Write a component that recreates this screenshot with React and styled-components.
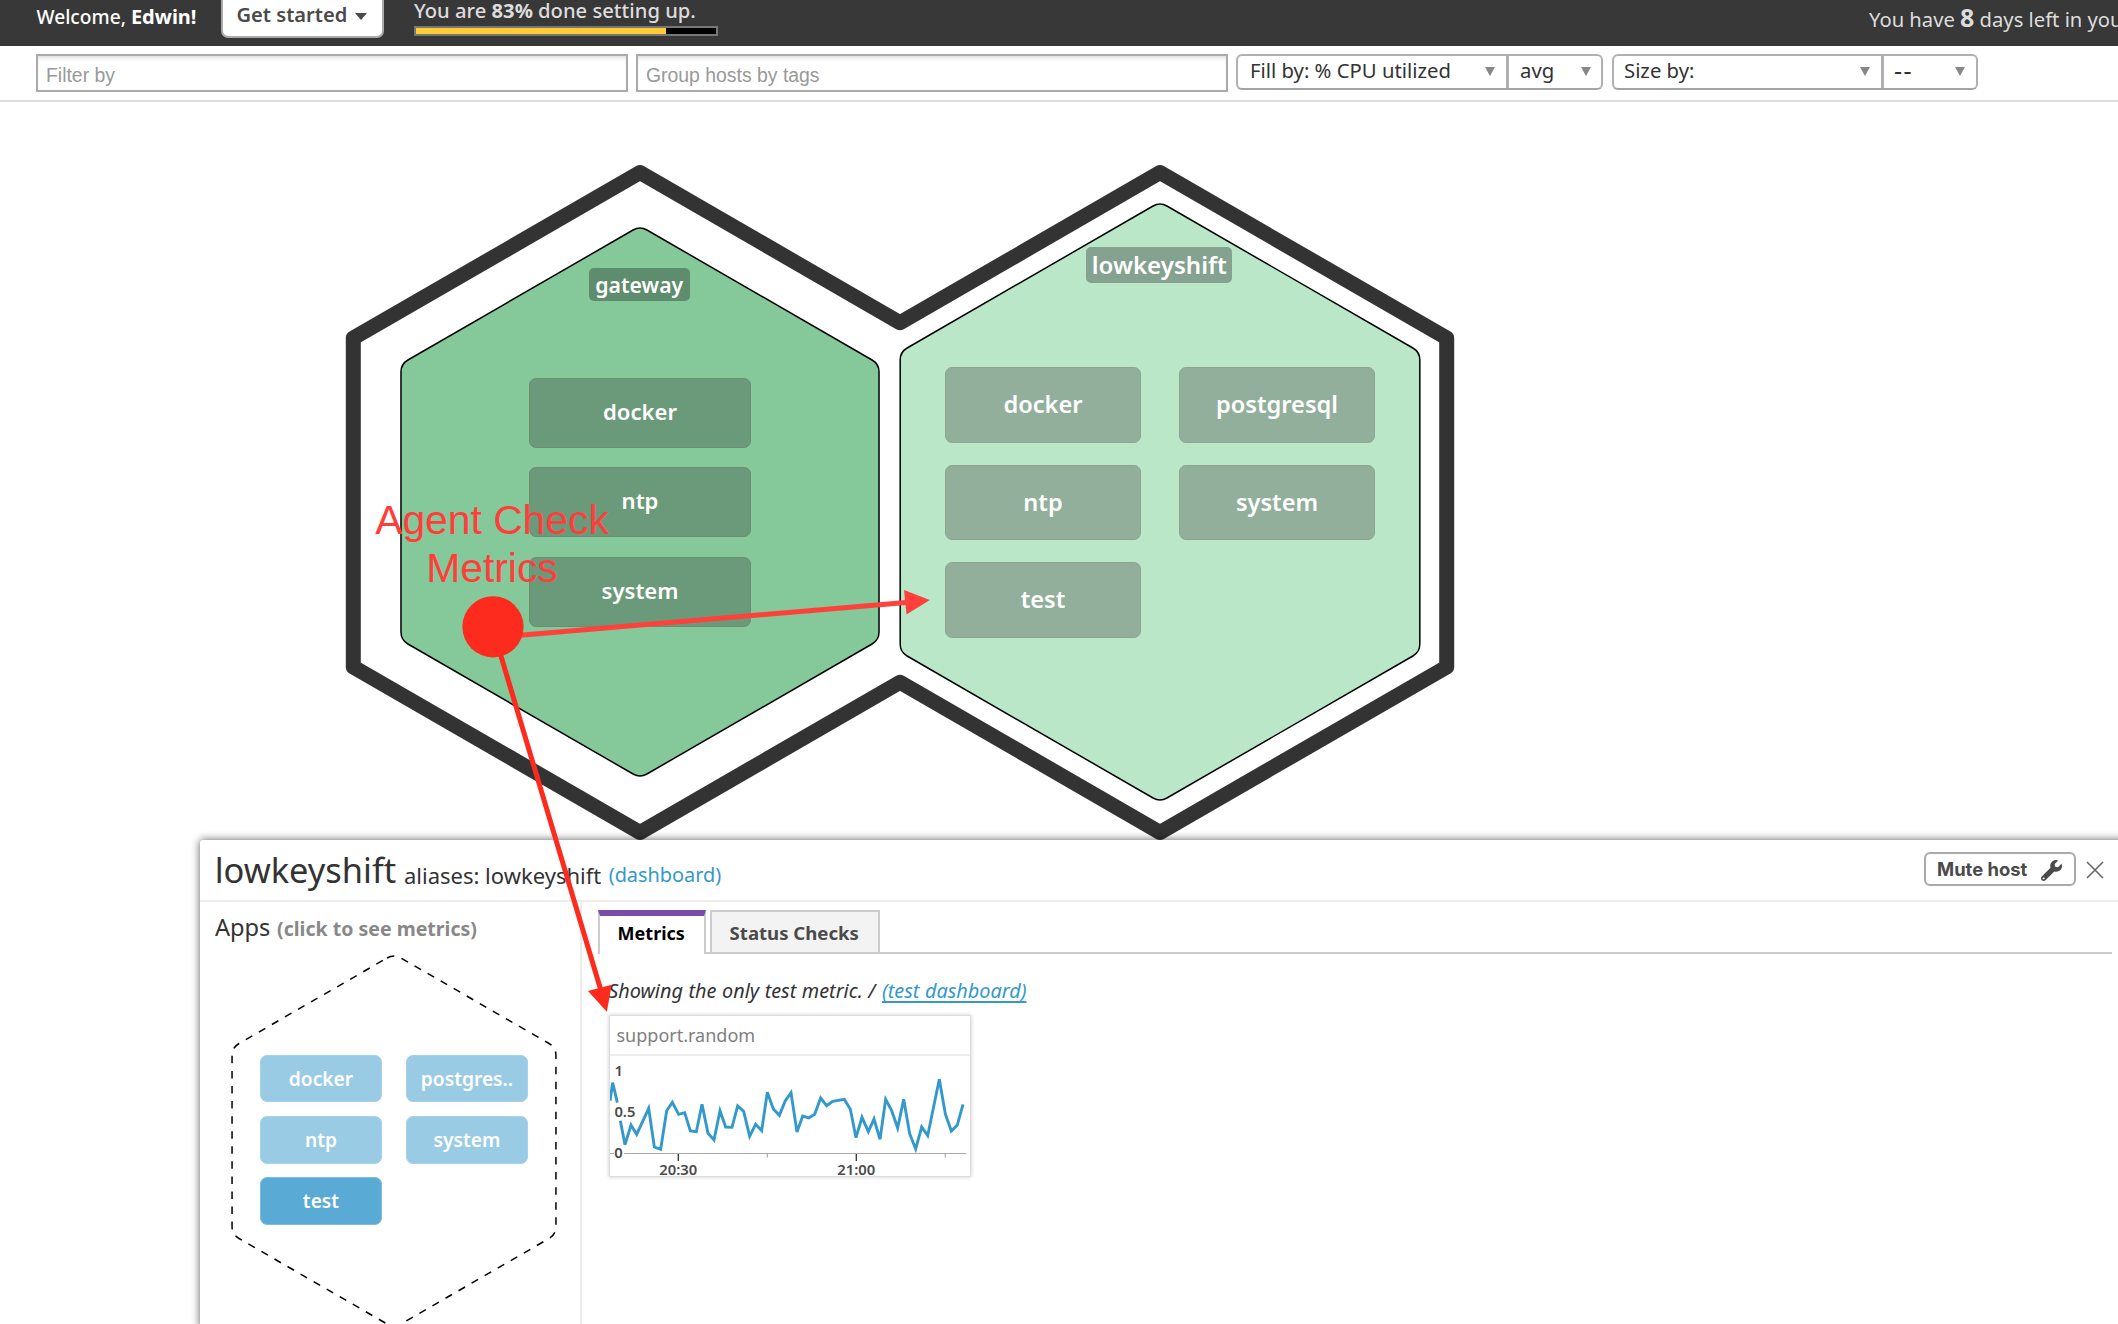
import React from 'react';
import styled, { createGlobalStyle, css } from 'styled-components';
import { FaWrench } from 'react-icons/fa';

const GlobalStyle = createGlobalStyle`
  *, *::before, *::after { box-sizing: border-box; }
  html, body { margin: 0; padding: 0; background: #fff; }
  body { overflow: hidden; font-family: "Noto Sans", sans-serif; color: #333; }
  h2, h3, p { margin: 0; font-weight: 400; }
`;

const Page = styled.div`
  position: relative;
  display: flex;
  flex-direction: column;
  width: 2118px;
  height: 1324px;
  overflow: hidden;
`;

/* ---------- header ---------- */

const Header = styled.header`
  display: flex;
  align-items: flex-start;
  flex: none;
  height: 46px;
  padding-left: 36.5px;
  background: #383838;
  font-size: 20px;
  white-space: nowrap;
`;

const Welcome = styled.div`
  flex: none;
  width: 184px;
  line-height: 33px;
  font-weight: 500;
  font-size: 19.2px;
  color: #fff;

  b { font-size: 20px; }
`;

const StartButton = styled.button`
  display: flex;
  flex: none;
  align-items: center;
  gap: 8px;
  width: 163.5px;
  height: 48px;
  margin: -10px 30px 0 0;
  padding: 1px 0 0 14px;
  border: 2px solid #aaa;
  border-radius: 7px;
  background: #fff;
  font: 600 20.1px/44px "Noto Sans", sans-serif;
  color: #4a4a4a;
`;

const CaretDown = styled.span`
  margin-top: 3px;
  border: 6px solid transparent;
  border-top: 7px solid #4a4a4a;
  border-bottom: 0;
`;

const Setup = styled.div`
  display: flex;
  flex: none;
  flex-direction: column;
  gap: 5px;
  line-height: 21px;
  color: #ddd;
  font-size: 20.2px;
  font-weight: 480;
`;

const Progress = styled.div`
  width: 304px;
  height: 10px;
  border: 2px solid #777;
  background: #000;
`;

const ProgressFill = styled.div`
  width: ${(p) => p.$percent}%;
  height: 100%;
  background: #fc3;
`;

const Trial = styled.div`
  flex: none;
  margin-left: 1151px;
  line-height: 38px;
  font-size: 20.2px;
  font-weight: 430;
  color: #ddd;

  b { font-size: 25px; line-height: 0; }
`;

/* ---------- toolbar ---------- */

const Toolbar = styled.div`
  display: flex;
  flex: none;
  gap: 8px;
  height: 56px;
  padding: 8px 0 0 36px;
  border-bottom: 2px solid #ddd;
`;

const FilterInput = styled.input`
  width: 592px;
  height: 38px;
  padding: 5px 8px 0;
  border: 2px solid #aaa;
  border-radius: 0;
  outline: 0;
  background: #fff;
  box-shadow: inset 0 4px 4px -2px rgba(0, 0, 0, 0.14);
  font: 19.4px "Liberation Sans", Arial, sans-serif;

  &::placeholder { color: #999; opacity: 1; }
`;

const SelectGroup = styled.div`
  display: flex;
  width: 367px;
  height: 36px;
  border: 2px solid #b0b0b0;
  border-bottom-color: #a4a4a4;
  border-radius: 6px;

  & + & { margin-left: 1px; width: 366px; }
`;

const Select = styled.div`
  display: flex;
  justify-content: space-between;
  align-items: center;
  width: ${(p) => p.$width}px;
  padding: 0 ${(p) => p.$end}px 3px ${(p) => p.$start}px;
  font-size: 20.3px;
  font-weight: 430;
  line-height: 29px;
  white-space: nowrap;

  & + & { border-left: ${(p) => p.$divider}px solid #b0b0b0; }
`;

const SelectArrow = styled.span`
  margin-top: 2px;
  border: 5px solid transparent;
  border-top: 9px solid #888;
  border-bottom: 0;
`;

const Dashes = styled.span`
  letter-spacing: 1.5px;
  font-size: 25px;
`;

/* ---------- host map ---------- */

const HostMap = styled.main`
  position: relative;
  flex: none;
  height: 738px;
`;

const ClusterOutline = styled.svg`
  position: absolute;
  left: 0;
  top: 0;
  width: 1500px;
  height: 738px;
`;

const HostNode = styled.section`
  position: absolute;
  left: ${(p) => p.$cx - p.$r}px;
  top: ${(p) => p.$cy - p.$r}px;
  display: flex;
  flex-direction: column;
  align-items: center;
  width: ${(p) => p.$r * 2}px;
  height: ${(p) => p.$r * 2}px;
`;

const HexShape = styled.svg`
  position: absolute;
  inset: 0;
  width: 100%;
  height: 100%;
  overflow: visible;
`;

const HostLabel = styled.div`
  position: relative;
  margin: ${(p) => p.$top}px 1.5px 0 0;
  width: ${(p) => p.$width}px;
  border-radius: 5px;
  color: #fff;
  text-align: center;
  ${(p) => p.$large
    ? css`height: 36px; line-height: 35.6px; font-size: 24.1px; font-weight: 560; background: #84a28f;`
    : css`height: 33px; line-height: 33.4px; font-size: 21.2px; font-weight: 600; background: #5d8d6d;`}
`;

const TileGrid = styled.div`
  position: relative;
  display: grid;
  grid-template-columns: repeat(${(p) => p.$columns}, ${(p) => p.$width}px);
  grid-auto-rows: ${(p) => p.$height}px;
  gap: ${(p) => p.$rowGap}px ${(p) => p.$colGap}px;
  margin-top: ${(p) => p.$top}px;
  line-height: ${(p) => p.$line}px;
  font-size: ${(p) => p.$font}px;
`;

const tileTones = {
  dark: ['#6b9a7a', '#6a8f71'],
  light: ['#92af9c', '#8ea58f'],
  blue: ['#99cbe5', '#a6d2e9'],
  active: ['#5aaad6', '#7dbcdf'],
};

const Tile = styled.div`
  border: 1px solid ${(p) => tileTones[p.$tone][1]};
  border-radius: 7px;
  background: ${(p) => tileTones[p.$tone][0]};
  color: #fff;
  font-weight: 600;
  text-align: center;
`;

/* ---------- host panel ---------- */

const Panel = styled.section`
  position: relative;
  display: flex;
  flex-direction: column;
  flex: 1;
  margin: 0 -20px 0 200px;
  border-radius: 3px 0 0 0;
  background: #fff;
  box-shadow: 0 0 9px rgba(0, 0, 0, 0.65);
`;

const PanelHeader = styled.div`
  display: flex;
  align-items: flex-start;
  height: 62px;
  padding: 0 35px 0 14.7px;
  border-bottom: 2px solid #ececec;
  white-space: nowrap;
`;

const HostName = styled.h2`
  width: 189.3px;
  font-size: 34.4px;
  line-height: 59px;
`;

const Aliases = styled.span`
  width: 204.7px;
  font-size: 22px;
  font-weight: 430;
  line-height: 71px;
`;

const DashboardLink = styled.a`
  font-size: 19.9px;
  line-height: 69px;
  color: #39c;
`;

const MuteButton = styled.button`
  display: flex;
  align-items: center;
  justify-content: space-between;
  width: 152px;
  height: 34px;
  margin: 12px 11px 0 auto;
  padding: 0 12px 0 11px;
  border: 2px solid #aaa;
  border-radius: 6px;
  background: #fff;
  font: 650 18.4px/30px Inter, sans-serif;
  color: #4a4a4a;

  svg { width: 21px; height: 21px; margin-top: 3px; }
`;

const CloseIcon = styled.svg`
  width: 16px;
  height: 16px;
  margin-top: 22px;
  overflow: visible;
  stroke: #666;
  stroke-width: 1.6;
`;

const PanelBody = styled.div`
  display: flex;
  flex: 1;
`;

const AppsColumn = styled.div`
  width: 382px;
  border-right: 2px solid #ececec;
`;

const AppsTitle = styled.h3`
  height: 52px;
  padding-left: 15px;
  font-size: 23.6px;
  line-height: 50px;
  white-space: nowrap;

  b { margin-left: 0.5px; font-size: 19.55px; line-height: 0; color: #888; }
`;

const MiniHost = styled.div`
  position: relative;
  display: flex;
  justify-content: center;
  width: 324px;
  height: 374px;
  margin-left: 32px;
`;

const Metrics = styled.div`
  flex: 1;
  padding: 8px 26px 0 16px;
`;

const Tabs = styled.div`
  display: flex;
  height: 44px;
`;

const Tab = styled.div`
  padding-right: 1.5px;
  text-align: center;
  font-weight: 700;
  ${(p) => p.$active
    ? css`width: 108px; border: solid #ccc; border-width: 6px 2px 0; border-top-color: #7b4ba5; line-height: 35px; font-size: 18px; color: #000;`
    : css`width: 170px; border: 2px solid #ccc; background: #f3f3f3; line-height: 42.6px; font-size: 18.6px; color: #4a4a4a;`}
`;

const TabRule = styled.div`
  flex: ${(p) => (p.$width ? `0 0 ${p.$width}px` : 1)};
  border-bottom: 2px solid #ccc;
`;

const Summary = styled.p`
  height: 40px;
  margin: 16.6px 0 4.4px 10.2px;
  font-size: 19.85px;
  line-height: 40px;
  font-style: italic;
  word-spacing: 0.4px;
  white-space: nowrap;

  a {
    margin-left: 1px;
    color: #39c;
    text-decoration: underline;
    text-decoration-thickness: 1.5px;
    text-decoration-skip-ink: none;
    text-underline-offset: 2.5px;
  }
`;

const Card = styled.div`
  width: 362px;
  height: 162px;
  margin-left: 11px;
  overflow: hidden;
  border: 1px solid #ddd;
  box-shadow: 0 0 4px rgba(0, 0, 0, 0.22);
`;

const CardTitle = styled.div`
  height: 40px;
  padding-left: 6.5px;
  border-bottom: 2px solid #ececec;
  font-size: 18px;
  line-height: 39.8px;
  color: #808080;
`;

const Chart = styled.svg`
  display: block;
  width: 360px;
  height: 120px;

  text { font: 600 14.8px "Noto Sans", sans-serif; fill: #4a4a4a; }
`;

/* ---------- annotation ---------- */

const Arrows = styled.svg`
  position: absolute;
  left: 0;
  top: 0;
  width: 1000px;
  height: 1100px;
`;

const Note = styled.div`
  position: absolute;
  left: 372px;
  top: 496px;
  width: 240px;
  font: 40.8px/48px "Liberation Sans", Arial, sans-serif;
  text-align: center;
  white-space: nowrap;
  color: #ff3d3a;
`;

/* Pointy-top hexagon centred in a 2r box, with softened corners. */
function hexPath(cx, cy, r, cut) {
  const h = (r * Math.sqrt(3)) / 2;
  const pts = [[0, -r], [h, -r / 2], [h, r / 2], [0, r], [-h, r / 2], [-h, -r / 2]];
  const toward = (a, b) => {
    const k = cut / r;
    return `${(cx + a[0] + (b[0] - a[0]) * k).toFixed(2)} ${(cy + a[1] + (b[1] - a[1]) * k).toFixed(2)}`;
  };
  return pts
    .map((p, i) => {
      const prev = pts[(i + 5) % 6];
      const next = pts[(i + 1) % 6];
      return `${i ? 'L' : 'M'}${toward(p, prev)} Q${(cx + p[0]).toFixed(2)} ${cy + p[1]} ${toward(p, next)}`;
    })
    .join(' ') + ' Z';
}

const hosts = [
  {
    name: 'gateway', cx: 640, cy: 400, r: 276, fill: '#85c89a', tone: 'dark',
    label: { $top: 41.7, $width: 101 },
    grid: { $columns: 1, $width: 222, $height: 70, $rowGap: 19.6, $colGap: 0, $top: 77, $font: 22.1, $line: 65.2 },
    apps: ['docker', 'ntp', 'system'],
  },
  {
    name: 'lowkeyshift', cx: 1160, cy: 400, r: 300, fill: '#bbe7c9', tone: 'light',
    label: { $top: 45.3, $width: 146, $large: true },
    grid: { $columns: 2, $width: 196, $height: 75.6, $rowGap: 21.8, $colGap: 38, $top: 84, $font: 23.6, $line: 72.6 },
    apps: ['docker', 'postgresql', 'ntp', 'system', 'test'],
  },
];

const series = [
  [0, 134], [8, 80], [22, 140], null, [31, 194], [45, 266], [63, 207], [80, 235], [116, 157], [133, 273], [152, 280],
  [170, 164], [187, 139], [206, 175], [224, 170], [241, 225], [259, 227], [276, 145], [294, 232], [312, 252], [330, 164],
  [347, 213], [366, 214], [383, 150], [401, 166], [419, 241], [437, 205], [455, 224], [472, 109], [490, 159], [508, 178],
  [526, 134], [543, 110], [561, 228], [578, 180], [596, 186], [614, 175], [632, 126], [650, 149], [668, 136], [703, 130],
  [721, 160], [738, 245], [756, 184], [775, 227], [792, 189], [810, 250], [827, 130], [845, 164], [863, 216], [881, 130],
  [899, 233], [917, 279], [935, 213], [953, 239], [970, 157], [988, 70], [1006, 174], [1024, 225], [1042, 207], [1059, 145],
];

const linePath = series
  .map((p, i) => (p ? `${i === 0 || !series[i - 1] ? 'M' : 'L'}${(p[0] / 3).toFixed(2)} ${(p[1] / 3).toFixed(2)}` : ''))
  .join(' ');

function Host({ host }) {
  const { name, cx, cy, r, fill, tone, label, grid, apps } = host;
  return (
    <HostNode $cx={cx} $cy={cy} $r={r}>
      <HexShape viewBox={`0 0 ${r * 2} ${r * 2}`}>
        <path d={hexPath(r, r, r, 8)} fill={fill} stroke="#000" strokeWidth="1.5" />
      </HexShape>
      <HostLabel {...label}>{name}</HostLabel>
      <TileGrid {...grid}>
        {apps.map((a) => <Tile key={a} $tone={tone}>{a}</Tile>)}
      </TileGrid>
    </HostNode>
  );
}

export default function App() {
  return (
    <Page>
      <GlobalStyle />
      <Header>
        <Welcome>Welcome, <b>Edwin!</b></Welcome>
        <StartButton>Get started <CaretDown /></StartButton>
        <Setup>
          <span>You are <b>83%</b> done setting up.</span>
          <Progress><ProgressFill $percent={83.3} /></Progress>
        </Setup>
        <Trial>You have <b>8</b> days left in your</Trial>
      </Header>

      <Toolbar>
        <FilterInput placeholder="Filter by" />
        <FilterInput placeholder="Group hosts by tags" />
        <SelectGroup>
          <Select $width={268} $start={12} $end={11}>Fill by: % CPU utilized <SelectArrow /></Select>
          <Select $width={95} $start={11} $end={10} $divider={1}>avg <SelectArrow /></Select>
        </SelectGroup>
        <SelectGroup>
          <Select $width={267} $start={10} $end={11}>Size by: <SelectArrow /></Select>
          <Select $width={95} $start={10} $end={11} $divider={3}><Dashes>--</Dashes> <SelectArrow /></Select>
        </SelectGroup>
      </Toolbar>

      <HostMap>
        <ClusterOutline viewBox="0 0 1500 738">
          <path
            d="M640 70.6 L900 220.7 L1160 70.6 L1446.7 236 V565 L1160 730.4 L900 580.3 L640 730.4 L353.3 565 V236 Z"
            fill="none" stroke="#333" strokeWidth="15" strokeLinejoin="round"
          />
        </ClusterOutline>
        {hosts.map((h) => <Host key={h.name} host={h} />)}
      </HostMap>

      <Panel>
        <PanelHeader>
          <HostName>lowkeyshift</HostName>
          <Aliases>aliases: lowkeyshift</Aliases>
          <DashboardLink>(dashboard)</DashboardLink>
          <MuteButton>Mute host <FaWrench /></MuteButton>
          <CloseIcon viewBox="0 0 16 16"><path d="M0 0 L16 16 M16 0 L0 16" /></CloseIcon>
        </PanelHeader>
        <PanelBody>
          <AppsColumn>
            <AppsTitle>Apps <b>(click to see metrics)</b></AppsTitle>
            <MiniHost>
              <HexShape viewBox="0 0 324 374">
                <path d={hexPath(162, 187, 187, 8)} fill="none" stroke="#000" strokeWidth="1.5" strokeDasharray="7.5 7.57" />
              </HexShape>
              <TileGrid $columns={2} $width={122} $height={47.4} $rowGap={13.8} $colGap={24} $top={101} $font={19.2} $line={46}>
                <Tile $tone="blue">docker</Tile>
                <Tile $tone="blue">postgres..</Tile>
                <Tile $tone="blue">ntp</Tile>
                <Tile $tone="blue">system</Tile>
                <Tile $tone="active">test</Tile>
              </TileGrid>
            </MiniHost>
          </AppsColumn>
          <Metrics>
            <Tabs>
              <Tab $active>Metrics</Tab>
              <TabRule $width={4} />
              <Tab>Status Checks</Tab>
              <TabRule />
            </Tabs>
            <Summary>Showing the only test metric. / <a>(test dashboard)</a></Summary>
            <Card>
              <CardTitle>support.random</CardTitle>
              <Chart viewBox="0 0 360 120">
                <path d="M0 97.5 H4 M14 97.5 H356" stroke="#aaa" strokeWidth="1" />
                <path d="M68.3 98 V105 M246.3 98 V105" stroke="#333" strokeWidth="1.3" />
                <path d="M157.3 98 V101.5 M335.3 98 V101.5" stroke="#999" strokeWidth="1" />
                <path d={linePath} fill="none" stroke="#39c" strokeWidth="2.9" />
                <text x="4.6" y="20.3">1</text>
                <text x="4.4" y="61.2">0.5</text>
                <text x="4.2" y="102.2">0</text>
                <text x="68.3" y="119" textAnchor="middle">20:30</text>
                <text x="246.3" y="119" textAnchor="middle">21:00</text>
              </Chart>
            </Card>
          </Metrics>
        </PanelBody>
      </Panel>

      <Note>Agent Check<br />Metrics</Note>
      <Arrows viewBox="0 0 1000 1100">
        <path d="M520 635.2 L906 602.4" stroke="#ff403b" strokeWidth="5" />
        <path d="M904 590 L929.8 600 L906.5 614.5 Z" fill="#ff403b" />
        <path d="M498 646 L602 994" stroke="#fd2b1d" strokeWidth="5" />
        <path d="M588 991 L611.8 984.7 L606.8 1011.7 Z" fill="#fd2b1d" />
        <circle cx="493" cy="626.8" r="30.6" fill="#fd2b1d" />
      </Arrows>
    </Page>
  );
}
